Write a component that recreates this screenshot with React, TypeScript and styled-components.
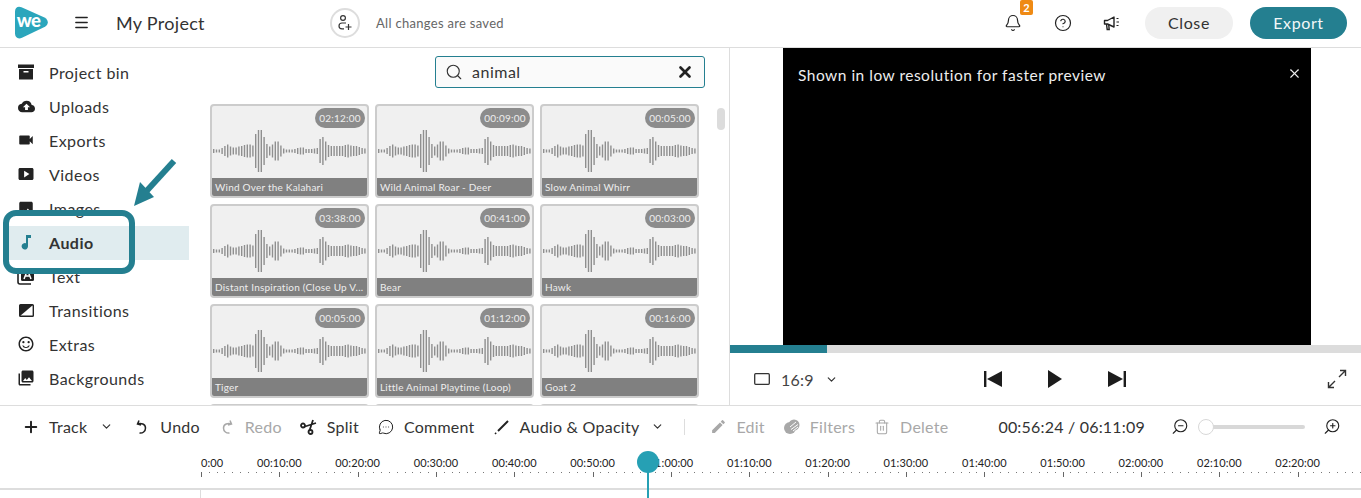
import React from "react";
import styled, { createGlobalStyle } from "styled-components";
import { Bell, ChevronDown, CircleHelp, MessageCircleMore, Plus, Search, X, ZoomIn, ZoomOut, Menu, Trash2 } from "lucide-react";
import { MdCloudUpload, MdVideocam, MdSmartDisplay, MdImage, MdOutlineSentimentSatisfied, MdPhotoLibrary, MdEdit } from "react-icons/md";

const teal = "#247f90";

const Global = createGlobalStyle`
  html, body { margin: 0; padding: 0; background: #fff; overflow: hidden; }
  * { box-sizing: border-box; }
  body { font-family: Lato, "Liberation Sans", sans-serif; color: #333; }
`;
const Page = styled.div`
  position: relative; width: 1361px; height: 498px; display: flex; flex-direction: column; overflow: hidden;
`;
const Header = styled.header`
  height: 48px; flex: none; display: flex; align-items: center; border-bottom: 1px solid #ddd; padding: 0 14px 2px 15px;
`;
const LogoBox = styled.div`width: 33px; height: 33px; flex: none; margin-right: 24px;`;
const IconBtn = styled.div<{ $w?: number; $ml?: number }>`
  width: ${p => p.$w ?? 18}px; height: 18px; flex: none; display: flex; align-items: center; justify-content: center;
  margin-left: ${p => p.$ml ?? 0}px; position: relative; color: #222;
`;
const Title = styled.div`font-size: 18px; margin-left: 26px; letter-spacing: .3px; color: #333; width: 214px;`;
const Invite = styled.div`
  width: 30px; height: 30px; border-radius: 50%; border: 2px solid #ddd; display: flex; align-items: center; justify-content: center; flex: none;
`;
const Saved = styled.div`font-size: 13px; color: #666; margin-left: 16px; letter-spacing: .3px;`;
const Spacer = styled.div`flex: 1;`;
const Badge = styled.span`
  position: absolute; left: 16px; top: -14px; width: 13px; height: 15px; background: #ef8a14; border-radius: 2px;
  color: #fff; font-size: 11px; font-weight: 700; display: flex; align-items: center; justify-content: center;
`;
const Pill = styled.div<{ $primary?: boolean; $w: number; $ml: number }>`
  width: ${p => p.$w}px; height: 32px; margin-left: ${p => p.$ml}px; border-radius: 16px; flex: none;
  display: flex; align-items: center; justify-content: center; font-size: 16px; letter-spacing: .6px;
  background: ${p => (p.$primary ? teal : "#f0f0f0")}; color: ${p => (p.$primary ? "#f2f7f8" : "#333")};
`;
const Main = styled.main`height: 358px; flex: none; display: flex; border-bottom: 1px solid #ddd; overflow: hidden;`;
const LeftPane = styled.div`width: 730px; flex: none; display: flex; border-right: 1px solid #ddd;`;
const Sidebar = styled.nav`width: 189px; flex: none; padding: 8px 0 0 8px; display: flex; flex-direction: column;`;
const NavRow = styled.div<{ $active?: boolean }>`
  height: 34px; flex: none; display: flex; align-items: center; gap: 14px; padding: 0 0 2px 9px; font-size: 16px; letter-spacing: .45px;
  color: #333; font-weight: ${p => (p.$active ? 700 : 400)}; background: ${p => (p.$active ? "#e0ecef" : "transparent")};
`;
const NavIcon = styled.span<{ $color?: string }>`
  width: 18px; height: 18px; display: flex; align-items: center; justify-content: center; color: ${p => p.$color ?? "#222"}; flex: none;
`;
const Content = styled.section`flex: 1; min-width: 0; display: flex; flex-direction: column; padding-left: 21px;`;
const SearchBox = styled.div`
  align-self: flex-end; margin: 8px 24px 16px 0; width: 270px; height: 32px; flex: none; border: 1px solid ${teal}; border-radius: 3px; background: #fafafa;
  display: flex; align-items: center; padding: 0 10px 0 9px; font-size: 16px; letter-spacing: .5px; color: #333; gap: 9px;
`;
const SearchText = styled.span`flex: 1; padding-bottom: 1px;`;
const GridRow = styled.div`display: flex; align-items: flex-start;`;
const Grid = styled.div`display: grid; grid-template-columns: repeat(3, 159px); grid-auto-rows: 94px; gap: 6px; flex: none;`;
const Thumb = styled.div`width: 8px; height: 22px; border-radius: 4px; background: #dcdcdc; margin: 4px 0 0 18px; flex: none;`;
const Card = styled.article`
  position: relative; border: 2px solid #ccc; border-radius: 4px; background: #f0f0f0; display: flex; flex-direction: column; overflow: hidden;
`;
const Duration = styled.span`
  position: absolute; top: 2px; right: 2px; width: 50px; height: 20px; border-radius: 10px; background: #8c8c8c; color: #eee;
  font-size: 10px; letter-spacing: .2px; display: flex; align-items: center; justify-content: center;
`;
const WaveWrap = styled.div`flex: 1; padding-top: 23px; display: flex; align-items: flex-start; min-height: 0;`;
const Caption = styled.div`
  height: 18px; flex: none; background: #808080; color: #eee; font-size: 10px; line-height: 18px; letter-spacing: .22px; padding: 0 3px;
  white-space: nowrap; overflow: hidden;
`;
const Preview = styled.div`flex: 1; min-width: 0; display: flex; flex-direction: column;`;
const Stage = styled.div`
  width: 528px; height: 297px; margin-left: 53px; background: #000; flex: none; display: flex; justify-content: space-between; align-items: flex-start;
  padding: 18px 9px 0 15px; color: #eee; font-size: 15.5px; letter-spacing: .5px;
`;
const Progress = styled.div`height: 8px; background: #dcdcdc; flex: none;`;
const ProgressFill = styled.div<{ $w: number }>`height: 100%; width: ${p => p.$w}px; background: ${teal};`;
const Controls = styled.div`flex: 1; display: flex; align-items: center; padding: 0 14px 0 24px;`;
const Ratio = styled.div`font-size: 16px; color: #444; margin-left: 11px; letter-spacing: .2px; width: 32px;`;
const Toolbar = styled.div`height: 41px; flex: none; display: flex; align-items: center; padding: 0 20px 0 22px; gap: 18px; font-size: 16px;`;
const Tool = styled.div<{ $off?: boolean }>`
  display: flex; align-items: center; gap: 9px; letter-spacing: .25px; color: ${p => (p.$off ? "#a8a8a8" : "#333")}; flex: none; white-space: nowrap;
`;
const ToolIcon = styled.span<{ $off?: boolean; $ml?: number }>`
  width: 18px; height: 18px; display: flex; align-items: center; justify-content: center; color: ${p => (p.$off ? "#a8a8a8" : "#222")}; flex: none;
  margin-left: ${p => p.$ml ?? 0}px;
`;
const Divider = styled.div`width: 1px; height: 16px; background: #ddd; flex: none; margin-right: 6px;`;
const Right = styled.div`margin-left: auto; display: flex; align-items: center; flex: none;`;
const Timecode = styled.div`font-size: 16px; letter-spacing: .2px; color: #333; margin-right: 26px;`;
const SliderTrack = styled.div`
  position: relative; width: 99px; height: 4px; border-radius: 2px; background: #d8d8d8; margin: 0 18px 0 17px;
`;
const SliderKnob = styled.span`
  position: absolute; left: -8px; top: -6px; width: 16px; height: 16px; border-radius: 50%; background: #fff; border: 1px solid #d8d8d8;
`;
const Ruler = styled.div`height: 43px; flex: none; padding-left: 201px; border-bottom: 2px solid #ddd; display: flex; flex-direction: column;`;
const Labels = styled.div`display: flex; height: 25px; padding-top: 9px; font-size: 11px; line-height: 14px; color: #222; white-space: nowrap; letter-spacing: .12px;`;
const FirstLabel = styled.div`width: 39.2px; flex: none;`;
const Label = styled.div`width: 78.33px; flex: none; text-align: center;`;
const Ticks = styled.div`
  height: 5px; margin-left: 0;
  background-image:
    repeating-linear-gradient(to right, #666 0 1px, transparent 1px 78.33px),
    repeating-linear-gradient(to right, #777 0 1px, transparent 1px 7.833px);
  background-size: 100% 5px, 100% 1px;
  background-repeat: no-repeat;
  background-position: 0 0, 0 0;
`;
const Tracks = styled.div`flex: 1; display: flex;`;
const TrackHead = styled.div`width: 201px; border-right: 1px solid #ddd;`;
const PlayKnob = styled.div`
  position: absolute; left: 637px; top: 451px; width: 22px; height: 22px; border-radius: 50%; background: #26a0b4;
`;
const PlayLine = styled.div`position: absolute; left: 647px; top: 470px; width: 2px; height: 28px; background: #26a0b4;`;
const Annotation = styled.div`
  position: absolute; left: 3px; top: 210px; width: 132px; height: 64px; border: 6px solid ${teal}; border-radius: 13px;
`;
const ArrowSvg = styled.svg`position: absolute; left: 130px; top: 155px;`;

const bars = [4,3,3,6,10,13,9,7,7,9,10,12,13,13,11,34,42,42,28,14,9,13,19,19,11,5,3,3,3,4,6,7,7,4,4,4,5,6,24,28,19,12,10,10,10,10,10,12,13,11,10,10,8,6,5];

const Wave = () => (
  <svg width="155" height="44" viewBox="0 0 155 44" style={{ flex: "none" }}>
    {bars.map((h, i) => (
      <rect key={i} x={1 + i * 2.8} y={22 - h / 2} width="1.4" height={h} fill="#8f8f8f" />
    ))}
  </svg>
);

const clips: [string, string][] = [
  ["02:12:00", "Wind Over the Kalahari"], ["00:09:00", "Wild Animal Roar - Deer"], ["00:05:00", "Slow Animal Whirr"],
  ["03:38:00", "Distant Inspiration (Close Up V..."], ["00:41:00", "Bear"], ["00:03:00", "Hawk"],
  ["00:05:00", "Tiger"], ["01:12:00", "Little Animal Playtime (Loop)"], ["00:16:00", "Goat 2"],
];

const ArchiveIcon = () => (
  <svg width="16" height="16" viewBox="0 0 16 16">
    <rect x="0" y="0.500" width="16" height="3.500" fill="#222" />
    <path d="M1 5h14v10.500H1z M5.500 7v1.500h5V7z" fill="#222" fillRule="evenodd" />
  </svg>
);
const TextIcon = () => (
  <svg width="18" height="18" viewBox="0 0 18 18" fill="none">
    <path d="M1 4v11a2 2 0 0 0 2 2h11" stroke="#222" strokeWidth="1.6" />
    <rect x="4" y="1" width="13" height="13" rx="1.5" fill="#222" />
    <path d="M7 12l3.5-9 3.5 9M8.3 9h4.4" stroke="#fff" strokeWidth="1.5" />
  </svg>
);
const TransitionIcon = () => (
  <svg width="15" height="13" viewBox="0 0 15 13">
    <rect x=".7" y=".7" width="13.600" height="11.600" rx=".8" fill="none" stroke="#222" strokeWidth="1.400" />
    <path d="M1 1h13L1 12z" fill="#222" />
  </svg>
);
const NoteIcon = () => (
  <svg width="14" height="16" viewBox="0 0 14 16">
    <path d="M7 1h5v3H9v8.2A3.2 3.2 0 1 1 7 9.3z" fill="currentColor" />
  </svg>
);
const nav: [string, React.ReactNode, boolean?][] = [
  ["Project bin", <ArchiveIcon />],
  ["Uploads", <MdCloudUpload size={17} />],
  ["Exports", <MdVideocam size={18} />],
  ["Videos", <MdSmartDisplay size={18} />],
  ["Images", <MdImage size={19} />],
  ["Audio", <NoteIcon />, true],
  ["Text", <TextIcon />],
  ["Transitions", <TransitionIcon />],
  ["Extras", <MdOutlineSentimentSatisfied size={18} />],
  ["Backgrounds", <MdPhotoLibrary size={18} />],
];

const marks = ["00:10:00","00:20:00","00:30:00","00:40:00","00:50:00","01:00:00","01:10:00","01:20:00","01:30:00","01:40:00","01:50:00","02:00:00","02:10:00","02:20:00"];

const Logo = () => (
  <svg width="33" height="33" viewBox="0 0 33 33">
    <path d="M0 5.500C0 1.500 3 -.3 6.500 1.200L29.500 11.500c4.300 2.200 4.300 7 .5 9.300L7 31.800C3 33.600 0 31.500 0 27.500z" fill="#2ba6bc" />
    <text x="1.800" y="21" fontFamily="Lato, sans-serif" fontWeight="900" fontSize="18.500" fill="#fff" letterSpacing="-.5">we</text>
  </svg>
);
const InviteIcon = () => (
  <svg width="16" height="18" viewBox="0 0 16 18" fill="none" stroke="#333" strokeWidth="1.2">
    <circle cx="6" cy="4" r="2.4" />
    <path d="M9 9H5c-2 0-3 1.400-3 3s1 2.800 3 2.800h2" />
    <path d="M11.500 10v6M8.500 13h6" />
  </svg>
);
const Megaphone = () => (
  <svg width="18" height="16" viewBox="0 0 18 16" fill="none" stroke="#222" strokeWidth="1.4">
    <path d="M1.500 5.500h3L11 2v10L4.500 9h-3z" strokeLinejoin="round" />
    <path d="M3.500 9l.7 5.500h2L5.700 9.500" />
    <path d="M13.500 3.500h2M13.500 7h2.500M13.500 10.500h2" strokeWidth="1.200" />
  </svg>
);
const SkipBack = () => (
  <svg width="20" height="16" viewBox="0 0 20 16"><rect x="1" y="0" width="2.400" height="16" fill="#1c1c1c" /><path d="M19 0v16L4 8z" fill="#1c1c1c" /></svg>
);
const SkipNext = () => (
  <svg width="20" height="16" viewBox="0 0 20 16"><rect x="16.600" y="0" width="2.400" height="16" fill="#1c1c1c" /><path d="M1 0v16l15-8z" fill="#1c1c1c" /></svg>
);
const PlayIcon = () => (
  <svg width="16" height="18" viewBox="0 0 16 18"><path d="M1 0v18l14-9z" fill="#1c1c1c" /></svg>
);
const RatioIcon = () => (
  <svg width="16" height="12" viewBox="0 0 16 12"><rect x=".7" y=".7" width="14.600" height="10.600" rx="1" fill="none" stroke="#333" strokeWidth="1.300" /></svg>
);
const Expand = () => (
  <svg width="20" height="20" viewBox="0 0 20 20" fill="none" stroke="#333" strokeWidth="1.400">
    <path d="M12 8l6-6M13 1.500h5.500V7M8 12l-6 6M1.500 13v5.500H7" />
  </svg>
);
const UndoIcon = ({ flip }: { flip?: boolean }) => (
  <svg width="14" height="16" viewBox="0 0 14 16" fill="none" stroke="currentColor" strokeWidth="1.500" style={flip ? { transform: "scaleX(-1)" } : undefined}>
    <path d="M4 1.500L2.500 5 6 6M2.800 4.800C6 3.800 10.500 5 10.500 9c0 3.500-3 5.500-6 5" />
  </svg>
);
const SplitIcon = () => (
  <svg width="18" height="16" viewBox="0 0 18 16" fill="none" stroke="#222" strokeWidth="1.800">
    <circle cx="3" cy="6.500" r="2" />
    <circle cx="10.500" cy="13" r="2" />
    <path d="M5 7.500L16 4M9.500 11.500L13 1" />
  </svg>
);
const Wand = () => (
  <svg width="16" height="16" viewBox="0 0 16 16" fill="none" stroke="#222">
    <path d="M4 12L14 2" strokeWidth="2" />
    <path d="M1 15l1.200-1.200" strokeWidth="1.500" />
  </svg>
);
const FiltersIcon = () => (
  <svg width="18" height="16" viewBox="0 0 18 16">
    <circle cx="7" cy="9" r="6" fill="#a8a8a8" />
    <circle cx="11" cy="6" r="5.500" fill="#a8a8a8" />
    <path d="M7 8l6-5M8 10.500l7-5M10 12l5-4" stroke="#fff" strokeWidth="1" />
  </svg>
);
const Chevron = () => <ChevronDown size={13} strokeWidth={2.2} color="#333" />;

export default function App() {
  return (
    <Page>
      <Global />
      <Header>
        <LogoBox><Logo /></LogoBox>
        <IconBtn><Menu size={17} strokeWidth={2} /></IconBtn>
        <Title>My Project</Title>
        <Invite><InviteIcon /></Invite>
        <Saved>All changes are saved</Saved>
        <Spacer />
        <IconBtn>
          <Bell size={18} strokeWidth={1.6} />
          <Badge>2</Badge>
        </IconBtn>
        <IconBtn $ml={32}><CircleHelp size={18} strokeWidth={1.6} /></IconBtn>
        <IconBtn $ml={31}><Megaphone /></IconBtn>
        <Pill $w={88} $ml={24}>Close</Pill>
        <Pill $w={97} $ml={17} $primary>Export</Pill>
      </Header>
      <Main>
        <LeftPane>
          <Sidebar>
            {nav.map(([label, icon, active]) => (
              <NavRow key={label} $active={active}>
                <NavIcon $color={active ? teal : undefined}>{icon}</NavIcon>
                {label}
              </NavRow>
            ))}
          </Sidebar>
          <Content>
            <SearchBox>
              <Search size={18} strokeWidth={1.5} color="#333" />
              <SearchText>animal</SearchText>
              <X size={18} strokeWidth={3.6} color="#222" />
            </SearchBox>
            <GridRow>
              <Grid>
                {clips.map(([time, name], i) => (
                  <Card key={i}>
                    <Duration>{time}</Duration>
                    <WaveWrap><Wave /></WaveWrap>
                    <Caption>{name}</Caption>
                  </Card>
                ))}
                <Card />
                <Card />
                <Card />
              </Grid>
              <Thumb />
            </GridRow>
          </Content>
        </LeftPane>
        <Preview>
          <Stage>
            <span>Shown in low resolution for faster preview</span>
            <X size={15} strokeWidth={1.8} color="#eee" />
          </Stage>
          <Progress><ProgressFill $w={97} /></Progress>
          <Controls>
            <RatioIcon />
            <Ratio>16:9</Ratio>
            <IconBtn $w={13} $ml={12}><Chevron /></IconBtn>
            <IconBtn $w={20} $ml={145}><SkipBack /></IconBtn>
            <IconBtn $w={16} $ml={44}><PlayIcon /></IconBtn>
            <IconBtn $w={20} $ml={44}><SkipNext /></IconBtn>
            <Spacer />
            <IconBtn $w={20}><Expand /></IconBtn>
          </Controls>
        </Preview>
      </Main>
      <Toolbar>
        <Tool><ToolIcon><Plus size={20} strokeWidth={2.6} /></ToolIcon>Track<ToolIcon $ml={1}><Chevron /></ToolIcon></Tool>
        <Tool><ToolIcon><UndoIcon /></ToolIcon>Undo</Tool>
        <Tool $off><ToolIcon $off><UndoIcon flip /></ToolIcon>Redo</Tool>
        <Tool><ToolIcon><SplitIcon /></ToolIcon>Split</Tool>
        <Tool><ToolIcon><MessageCircleMore size={16} strokeWidth={1.5} /></ToolIcon>Comment</Tool>
        <Tool><ToolIcon><Wand /></ToolIcon>Audio &amp; Opacity<ToolIcon><Chevron /></ToolIcon></Tool>
        <Divider />
        <Tool $off><ToolIcon $off><MdEdit size={17} /></ToolIcon>Edit</Tool>
        <Tool $off><ToolIcon $off><FiltersIcon /></ToolIcon>Filters</Tool>
        <Tool $off><ToolIcon $off><Trash2 size={16} strokeWidth={1.6} /></ToolIcon>Delete</Tool>
        <Right>
          <Timecode>00:56:24 / 06:11:09</Timecode>
          <IconBtn><ZoomOut size={19} strokeWidth={1.5} style={{ transform: "scaleX(-1)" }} /></IconBtn>
          <SliderTrack><SliderKnob /></SliderTrack>
          <IconBtn><ZoomIn size={19} strokeWidth={1.5} style={{ transform: "scaleX(-1)" }} /></IconBtn>
        </Right>
      </Toolbar>
      <Ruler>
        <Labels>
          <FirstLabel>0:00</FirstLabel>
          {marks.map(m => <Label key={m}>{m}</Label>)}
        </Labels>
        <Ticks />
      </Ruler>
      <Tracks><TrackHead /></Tracks>
      <PlayLine />
      <PlayKnob />
      <Annotation />
      <ArrowSvg width="50" height="56" viewBox="0 0 50 56">
        <path d="M44 6L12 41" stroke={teal} strokeWidth="6" fill="none" />
        <path d="M4 51L10 27 24 42z" fill={teal} />
      </ArrowSvg>
    </Page>
  );
}
